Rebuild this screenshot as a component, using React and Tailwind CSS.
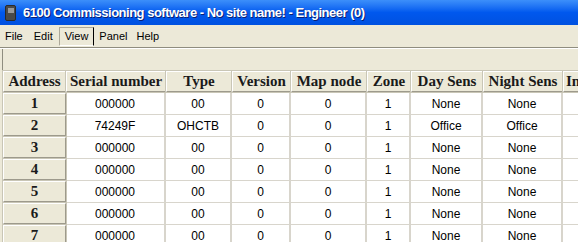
import React from 'react';

const columns = [
    { name: 'Address', w: 'w-[63px]' },
    { name: 'Serial number', w: 'w-[100px]' },
    { name: 'Type', w: 'w-[66px]' },
    { name: 'Version', w: 'w-[59px]' },
    { name: 'Map node', w: 'w-[76px]' },
    { name: 'Zone', w: 'w-[44px]' },
    { name: 'Day Sens', w: 'w-[72px]' },
    { name: 'Night Sens', w: 'w-[80px]' },
];

const rows = [
    ['1', '000000', '00', '0', '0', '1', 'None', 'None'],
    ['2', '74249F', 'OHCTB', '0', '0', '1', 'Office', 'Office'],
    ['3', '000000', '00', '0', '0', '1', 'None', 'None'],
    ['4', '000000', '00', '0', '0', '1', 'None', 'None'],
    ['5', '000000', '00', '0', '0', '1', 'None', 'None'],
    ['6', '000000', '00', '0', '0', '1', 'None', 'None'],
    ['7', '000000', '00', '0', '0', '1', 'None', 'None'],
];

const raised = 'border border-t-white border-l-white border-r-[#9d9a8c] border-b-[#9d9a8c] bg-[#ece9d8] outline outline-1 outline-[#c9c6b6]';

const App = () => {
    return (
        <div className="w-[578px] h-[242px] overflow-hidden bg-[#ece9d8]">
            {/* Title bar */}
            <div className="h-[25px] flex items-center gap-[7px] pl-[5px] bg-gradient-to-b from-[#3c8ffa] via-[#0058ee] to-[#0051e0]">
                <div className="w-[11px] h-[16px] rounded-[2px] bg-[#4a4a4a] border border-[#2a2a2a] flex items-start justify-center pt-[2px]">
                    <div className="w-[6px] h-[5px] bg-[#9a9a9a]"></div>
                </div>
                <span className="text-white font-bold text-[13px] tracking-[-0.5px] font-['Liberation_Sans',sans-serif] [text-shadow:1px_1px_0_#0a1f73]">
                    6100 Commissioning software - No site name! - Engineer (0)
                </span>
            </div>

            {/* Menu bar */}
            <div className="h-[22px] flex items-center font-['Liberation_Sans',sans-serif] text-[11px] text-black">
                <span className="ml-[5px]">File</span>
                <span className="ml-[11px]">Edit</span>
                <span className="ml-[6px] px-[5px] h-[19px] flex items-center border border-t-[#aca899] border-l-[#aca899] border-r-black border-b-white">View</span>
                <span className="ml-[5px]">Panel</span>
                <span className="ml-[9px]">Help</span>
            </div>
            <div className="h-[1px] bg-[#8f8d7f]"></div>
            <div className="h-[1px] bg-white"></div>

            {/* Toolbar / grid pane */}
            <div className="ml-[2px] border-l border-l-[#8f8d7f] h-[194px]">
                <div className="h-[22px]"></div>
                <div className="bg-white">
                    <div className="flex bg-[#ece9d8]">
                        {columns.map((c) => (
                            <div
                                key={c.name}
                                className={`${c.w} shrink-0 h-[21px] flex items-center justify-center font-['Liberation_Serif',serif] font-bold text-[15px] text-[#1a1a1a] whitespace-nowrap ${raised}`}
                            >
                                {c.name}
                            </div>
                        ))}
                        <div className={`w-[40px] shrink-0 h-[21px] flex items-center pl-[2px] font-['Liberation_Serif',serif] font-bold text-[15px] text-[#1a1a1a] whitespace-nowrap ${raised}`}>
                            In
                        </div>
                    </div>
                    {rows.map((r) => (
                        <div key={r[0]} className="flex border-t border-t-[#d8d5cc]">
                            <div className={`w-[63px] shrink-0 h-[21px] flex items-center justify-center font-['Liberation_Serif',serif] font-bold text-[15px] text-[#1a1a1a] ${raised}`}>
                                {r[0]}
                            </div>
                            {r.slice(1).map((v, i) => (
                                <div
                                    key={i}
                                    className={`${columns[i + 1].w} shrink-0 h-[21px] flex items-center justify-center font-['Liberation_Sans',sans-serif] text-[12px] text-black border-r-[2px] border-r-[#d8d5cc]`}
                                >
                                    {v}
                                </div>
                            ))}
                        </div>
                    ))}
                </div>
            </div>
        </div>
    );
};

export default App;
